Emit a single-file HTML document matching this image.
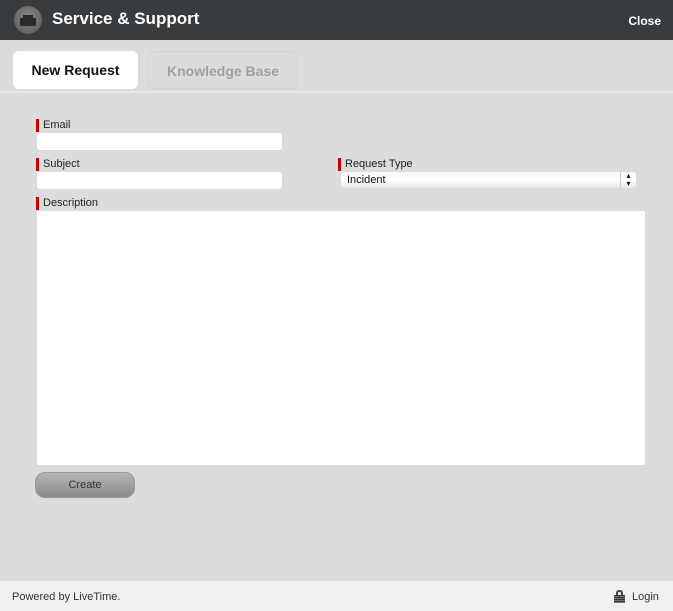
<!DOCTYPE html>
<html><head><style>
*{margin:0;padding:0;box-sizing:border-box}
body{width:673px;height:611px;background:#dcdcdc;font-family:"Liberation Sans",sans-serif;position:relative;overflow:hidden}
.hdr{position:absolute;left:0;top:0;width:673px;height:40px;background:#393c3f}
.hdr .t{position:absolute;left:52px;top:9px;color:#fff;font-weight:bold;font-size:17px}
.hdr .c{position:absolute;right:12px;top:14px;color:#fff;font-weight:bold;font-size:12px}
.ico{position:absolute;left:14px;top:6px;width:28px;height:28px;border-radius:50%;background:radial-gradient(circle at 50% 40%,#888,#555)}
.tab{position:absolute;top:51px;height:38px;border-radius:6px;font-weight:bold;font-size:14px;text-align:center;line-height:38px}
.sep{position:absolute;left:0;top:91px;width:673px;height:2px;background:#e8e8e8}
.lab{position:absolute;font-size:11px;color:#222;border-left:3px solid #c00;padding-left:4px;height:13px;line-height:13px}
.in{position:absolute;background:#fff;border-radius:3px}
.btn{position:absolute;left:35px;top:472px;width:100px;height:26px;border-radius:10px;background:linear-gradient(#b5b5b5,#8a8a8a);border:1px solid #999;font-size:11px;color:#333;text-align:center;line-height:25px}
.ft{position:absolute;left:0;top:581px;width:673px;height:30px;background:#f0f0f0;font-size:11px;color:#333}
</style></head><body>
<div class="hdr"><div class="ico"><div style="position:absolute;left:6px;top:12px;width:16px;height:8px;background:#2a2a2a;border-radius:1px"></div><div style="position:absolute;left:9px;top:9px;width:10px;height:3px;background:#2a2a2a"></div></div><div class="t">Service &amp; Support</div><div class="c">Close</div></div>
<div class="tab" style="left:13px;width:125px;background:#fff;color:#111">New Request</div>
<div class="tab" style="left:148px;width:150px;border:1px solid #d2d2d2;color:#a0a0a0">Knowledge Base</div>
<div class="sep"></div>
<div class="lab" style="left:36px;top:119px">Email</div>
<div class="in" style="left:37px;top:133px;width:245px;height:17px"></div>
<div class="lab" style="left:36px;top:158px">Subject</div>
<div class="in" style="left:37px;top:172px;width:245px;height:17px"></div>
<div class="lab" style="left:338px;top:158px">Request Type</div>
<div class="in" style="left:341px;top:172px;width:295px;height:16px;background:linear-gradient(#f8f8f8,#fff 50%,#e8e8e8);font-size:11px;line-height:16px;padding-left:6px;color:#111">Incident<span style="position:absolute;right:0;top:0;width:16px;height:16px;border-left:1px solid #ccc;font-size:8px;text-align:center;line-height:8px">▴<br>▾</span></div>
<div class="lab" style="left:36px;top:197px">Description</div>
<div class="in" style="left:37px;top:211px;width:608px;height:254px;border-radius:2px"></div>
<div class="btn">Create</div>
<div class="ft"><span style="position:absolute;left:12px;top:10px">Powered by LiveTime.</span><span style="position:absolute;left:614px;top:9px;width:11px;height:13px"><span style="position:absolute;left:2px;top:0;width:7px;height:6px;border:2px solid #444;border-bottom:none;border-radius:3px 3px 0 0"></span><span style="position:absolute;left:0;top:5px;width:11px;height:8px;background:repeating-linear-gradient(#333 0 1px,#777 1px 2px)"></span></span><span style="position:absolute;left:632px;top:10px">Login</span></div>
</body></html>
